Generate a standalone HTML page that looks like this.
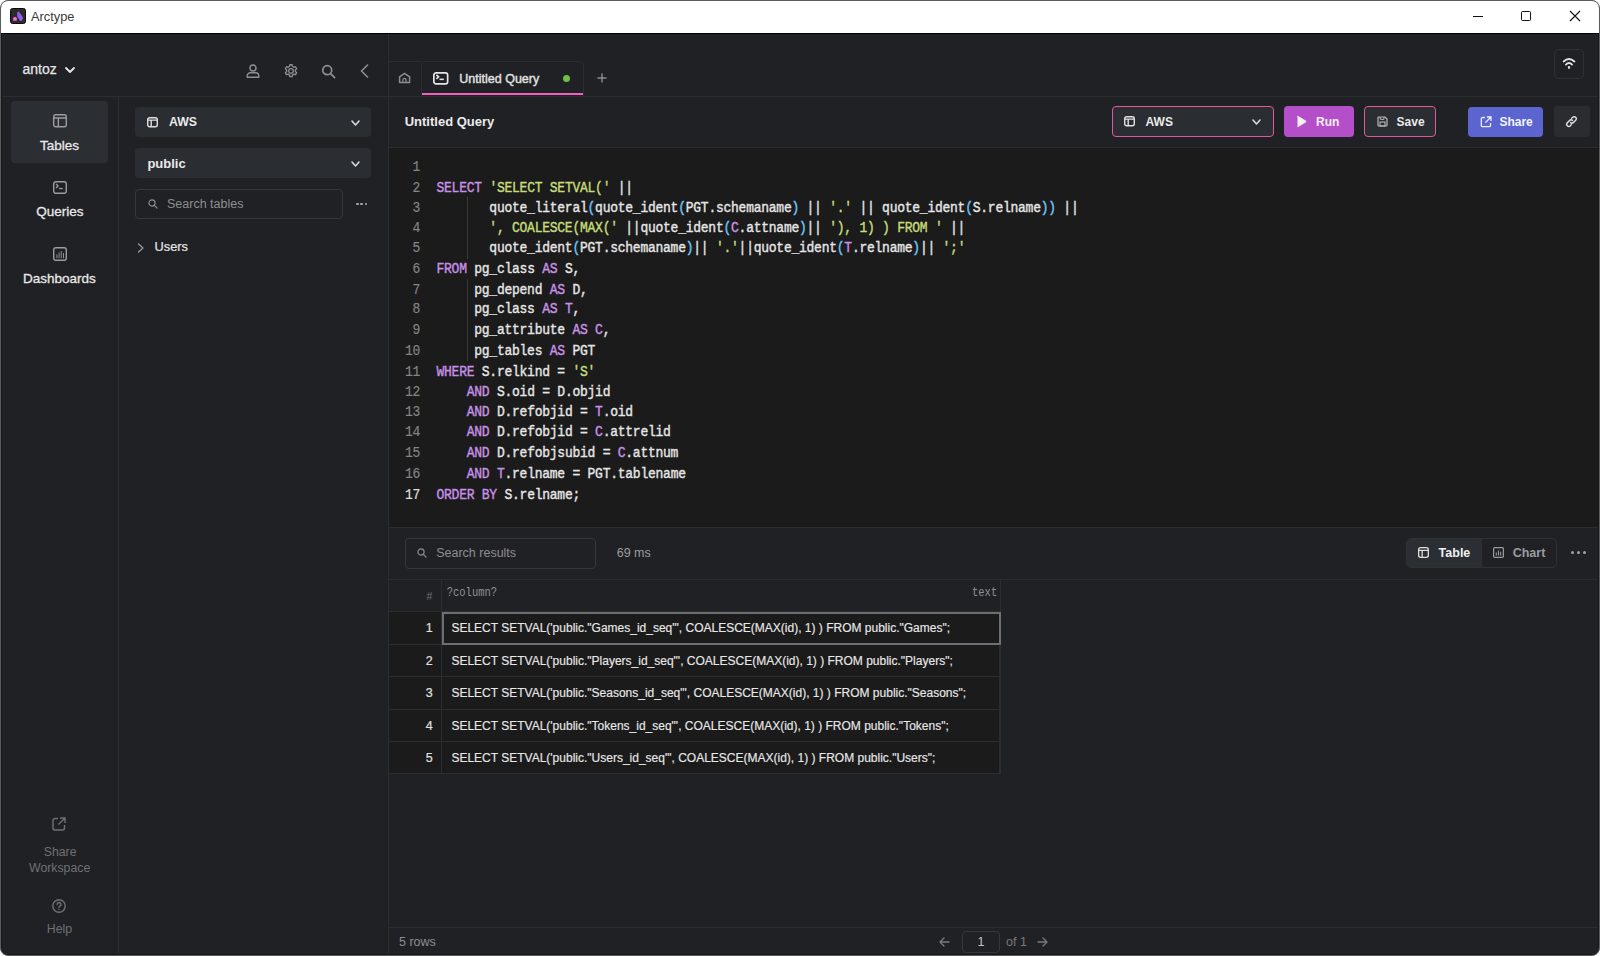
<!DOCTYPE html>
<html><head><meta charset="utf-8">
<style>
*{box-sizing:border-box;margin:0;padding:0}
html,body{width:1600px;height:956px;overflow:hidden;background:#ffffff}
body{font-family:"Liberation Sans",sans-serif;position:relative}
.a{position:absolute}
.t{position:absolute;white-space:nowrap;line-height:1}
svg{position:absolute;overflow:visible}
.code{position:absolute;font-family:"Liberation Mono",monospace;font-size:13px;letter-spacing:-0.25px;color:#e6e6e6;white-space:pre;line-height:17.774px;transform:scaleY(1.15);transform-origin:0 0;-webkit-text-stroke:0.35px currentColor}
.k{color:#c890e6}
.s{color:#c6dc7a}
.p{color:#6cc6fa}
.ln{position:absolute;text-align:right;font-family:"Liberation Mono",monospace;font-size:13px;letter-spacing:-0.25px;color:#858585;white-space:pre;line-height:17.774px;transform:scaleY(1.15);transform-origin:0 0;-webkit-text-stroke:0.15px currentColor}
</style></head><body>
<div class="a" style="left:0px;top:0px;width:1600px;height:956px;background:#202124;border-radius:8px;border:1px solid #5a5c5e;"></div>
<div class="a" style="left:1px;top:1px;width:1598px;height:32px;background:#fff;border-radius:7px 7px 0 0;"></div>
<div class="a" style="left:1px;top:33px;width:1598px;height:1px;background:#000;"></div>
<div class="a" style="left:10px;top:8px;width:16px;height:16px;background:#2d2a2a;border-radius:2.5px;border:1px solid #0c0a0a;"></div>
<svg style="left:10px;top:8px" width="16" height="16"><path d="M7.2 4.5 L8.4 3.2 L9.5 4.5 L12.5 8.8 L12.9 10.8 L11.8 12.7 L9.8 12.7 L7.3 8.5 Z" fill="#8f5cf6"/><path d="M3 10 L5 8.8 L7 10 L6.7 12.7 L3.3 12.7 Z" fill="#f46bd6"/></svg>
<div class="t" style="left:31px;top:11.46px;font-size:12.8px;color:#3a3a3a;">Arctype</div>
<div class="a" style="left:1473px;top:16px;width:10px;height:1px;background:#111;"></div>
<div class="a" style="left:1521px;top:11px;width:10px;height:10px;border:1px solid #111;border-radius:1.5px;"></div>
<svg style="left:1570px;top:11px" width="10" height="10"><path d="M0 0 L10 10 M10 0 L0 10" stroke="#111" stroke-width="1.1"/></svg>
<div class="a" style="left:1px;top:96px;width:1598px;height:1px;background:#2b2d31;"></div>
<div class="a" style="left:388px;top:34px;width:1px;height:921px;background:#2b2d31;"></div>
<div class="a" style="left:118px;top:97px;width:1px;height:858px;background:#2b2d31;"></div>
<div class="t" style="left:22.5px;top:62.15px;font-size:14px;color:#e6e6e6;-webkit-text-stroke:0.25px #e6e6e6;">antoz</div>
<svg style="left:65px;top:67px" width="10" height="7"><path d="M1 1 L5 5 L9 1" fill="none" stroke="#e6e6e6" stroke-width="1.8" stroke-linecap="round" stroke-linejoin="round"/></svg>
<svg style="left:246px;top:64px" width="14" height="14" viewBox="0 0 14 14"><circle cx="7" cy="4" r="3" fill="none" stroke="#8d8f93" stroke-width="1.4"/><path d="M1.2 13.2 v-1.3 a3.2 3.2 0 0 1 3.2 -3.2 h5.2 a3.2 3.2 0 0 1 3.2 3.2 v1.3 Z" fill="none" stroke="#8d8f93" stroke-width="1.4" stroke-linejoin="round"/></svg>
<svg style="left:283px;top:63px" width="16" height="16" viewBox="0 0 24 24"><path d="M12 8.5a3.5 3.5 0 1 0 0 7a3.5 3.5 0 1 0 0-7z" fill="none" stroke="#8d8f93" stroke-width="2"/><path d="M10.3 2.6h3.4l.6 2.6a7.5 7.5 0 0 1 2 1.2l2.5-.8 1.7 3-2 1.8a7.5 7.5 0 0 1 0 2.3l2 1.8-1.7 3-2.5-.8a7.5 7.5 0 0 1-2 1.2l-.6 2.6h-3.4l-.6-2.6a7.5 7.5 0 0 1-2-1.2l-2.5.8-1.7-3 2-1.8a7.5 7.5 0 0 1 0-2.3l-2-1.8 1.7-3 2.5.8a7.5 7.5 0 0 1 2-1.2z" fill="none" stroke="#8d8f93" stroke-width="2" stroke-linejoin="round"/></svg>
<svg style="left:321px;top:64px" width="15" height="15" viewBox="0 0 15 15"><circle cx="6.2" cy="6.2" r="4.5" fill="none" stroke="#8d8f93" stroke-width="1.7"/><path d="M9.6 9.6 L13.6 13.6" stroke="#8d8f93" stroke-width="1.7" stroke-linecap="round"/></svg>
<svg style="left:360px;top:64px" width="9" height="14" viewBox="0 0 9 14"><path d="M7.5 1 L1.5 7 L7.5 13" fill="none" stroke="#8d8f93" stroke-width="1.6" stroke-linecap="round" stroke-linejoin="round"/></svg>
<div class="a" style="left:11px;top:101px;width:97px;height:62px;background:#2b2e32;border-radius:4px;"></div>
<svg style="left:53px;top:114px" width="14" height="13.5" viewBox="0 0 14 13.5"><rect x="0.7" y="0.7" width="12.6" height="12.1" rx="2" fill="none" stroke="#9a9ca0" stroke-width="1.4"/><path d="M0.7 4.05 H13.3 M5.32 4.05 V12.8" stroke="#9a9ca0" stroke-width="1.4"/></svg>
<div class="t" style="left:40px;top:138.97px;font-size:13.5px;color:#e8e8e8;-webkit-text-stroke:0.3px #e8e8e8;">Tables</div>
<svg style="left:53px;top:181px" width="14" height="13" viewBox="0 0 14 13"><rect x="0.7" y="0.7" width="12.6" height="11.6" rx="2.2" fill="none" stroke="#9a9ca0" stroke-width="1.4"/><path d="M3.08 2.86 L5.04 4.94 L3.08 7.02" fill="none" stroke="#9a9ca0" stroke-width="1.3299999999999998" stroke-linejoin="miter"/><path d="M5.88 7.54 H9.80" fill="none" stroke="#9a9ca0" stroke-width="1.26"/></svg>
<div class="t" style="left:36.2px;top:205.07px;font-size:13.5px;color:#e8e8e8;-webkit-text-stroke:0.3px #e8e8e8;">Queries</div>
<svg style="left:53px;top:247px" width="14" height="14" viewBox="0 0 14 14"><rect x="0.7" y="0.7" width="12.6" height="12.6" rx="2" fill="none" stroke="#9a9ca0" stroke-width="1.4"/><path d="M3.9 11.2 V7.5 M6.1 11.2 V5.5 M8.3 11.2 V4 M10.5 11.2 V6" stroke="#9a9ca0" stroke-width="0.9"/></svg>
<div class="t" style="left:23px;top:272.27px;font-size:13.5px;color:#e8e8e8;-webkit-text-stroke:0.3px #e8e8e8;">Dashboards</div>
<svg style="left:52px;top:817px" width="14" height="14" viewBox="0 0 14 14"><path d="M6 1.5 H3 a2 2 0 0 0 -2 2 V11 a2 2 0 0 0 2 2 H10.5 a2 2 0 0 0 2 -2 V8" fill="none" stroke="#6e7074" stroke-width="1.4"/><path d="M8 1 H13 V6 M13 1 L6.5 7.5" fill="none" stroke="#6e7074" stroke-width="1.4"/></svg>
<div class="t" style="left:43.7px;top:845.89px;font-size:12.3px;color:#6e7074;">Share</div>
<div class="t" style="left:29px;top:862.19px;font-size:12.3px;color:#6e7074;">Workspace</div>
<svg style="left:52px;top:899px" width="14" height="14" viewBox="0 0 14 14"><circle cx="7" cy="7" r="6.2" fill="none" stroke="#6e7074" stroke-width="1.4"/><path d="M5.2 5.4 a1.9 1.9 0 1 1 2.6 1.7 c-0.6 0.3 -0.8 0.6 -0.8 1.2" fill="none" stroke="#6e7074" stroke-width="1.4" stroke-linecap="round"/><circle cx="7" cy="10.3" r="0.8" fill="#6e7074"/></svg>
<div class="t" style="left:46.8px;top:923.39px;font-size:12.3px;color:#6e7074;">Help</div>
<div class="a" style="left:135px;top:107px;width:236px;height:30px;background:#2a2d31;border-radius:4px;"></div>
<svg style="left:147px;top:117px" width="11" height="10.5" viewBox="0 0 11 10.5"><rect x="0.7" y="0.7" width="9.6" height="9.1" rx="2" fill="none" stroke="#e2e2e2" stroke-width="1.4"/><path d="M0.7 3.15 H10.3 M4.18 3.15 V9.8" stroke="#e2e2e2" stroke-width="1.4"/></svg>
<div class="t" style="left:169px;top:116.39px;font-size:12.3px;color:#eaeaea;font-weight:bold;">AWS</div>
<svg style="left:350.5px;top:120px" width="9" height="6" viewBox="0 0 9 6"><path d="M1 1 L4.5 5 L8 1" fill="none" stroke="#d8d8d8" stroke-width="1.6" stroke-linecap="round" stroke-linejoin="round"/></svg>
<div class="a" style="left:135px;top:148px;width:236px;height:30px;background:#2a2d31;border-radius:4px;"></div>
<div class="t" style="left:147.4px;top:156.69px;font-size:13px;color:#eaeaea;font-weight:bold;">public</div>
<svg style="left:350.5px;top:160.5px" width="9" height="6" viewBox="0 0 9 6"><path d="M1 1 L4.5 5 L8 1" fill="none" stroke="#d8d8d8" stroke-width="1.6" stroke-linecap="round" stroke-linejoin="round"/></svg>
<div class="a" style="left:135px;top:189px;width:208px;height:30px;border:1px solid #35373b;border-radius:4px;"></div>
<svg style="left:148px;top:199px" width="10" height="10" viewBox="0 0 11 11"><circle cx="4.4" cy="4.4" r="3.4" fill="none" stroke="#8a8c90" stroke-width="1.3"/><path d="M7 7 L10 10" stroke="#8a8c90" stroke-width="1.4" stroke-linecap="round"/></svg>
<div class="t" style="left:167px;top:198.42px;font-size:12.5px;color:#8c8e92;">Search tables</div>
<div class="a" style="left:356.0px;top:202.8px;width:2.6px;height:2.6px;background:#a6a8ac;border-radius:50%;"></div>
<div class="a" style="left:360.4px;top:202.8px;width:2.6px;height:2.6px;background:#a6a8ac;border-radius:50%;"></div>
<div class="a" style="left:364.8px;top:202.8px;width:2.6px;height:2.6px;background:#a6a8ac;border-radius:50%;"></div>
<svg style="left:137px;top:243px" width="8" height="10" viewBox="0 0 8 10"><path d="M1.5 1 L6 5 L1.5 9" fill="none" stroke="#9a9ca0" stroke-width="1.3" stroke-linecap="round" stroke-linejoin="round"/></svg>
<div class="t" style="left:154.6px;top:241.16px;font-size:12.8px;color:#e6e6e6;-webkit-text-stroke:0.2px #e6e6e6;">Users</div>
<div class="a" style="left:389px;top:61px;width:33px;height:1px;background:#2b2d31;"></div>
<svg style="left:398px;top:72px" width="13" height="12" viewBox="0 0 13 12"><path d="M1.6 4.9 L6.5 1.3 L11.6 4.9 V10.6 H1.6 Z" fill="none" stroke="#8a8d93" stroke-width="1.5" stroke-linejoin="round"/><path d="M4.9 10.6 V8 a1.6 1.6 0 0 1 3.2 0 V10.6" fill="none" stroke="#8a8d93" stroke-width="1.3"/></svg>
<div class="a" style="left:421px;top:61px;width:163px;height:36px;border:1px solid #2b2d31;border-bottom:none;border-radius:5px 5px 0 0;"></div>
<div class="a" style="left:422px;top:93px;width:161px;height:2px;background:#f35fc0;"></div>
<svg style="left:433px;top:72px" width="15.5" height="12.7" viewBox="0 0 15.5 12.7"><rect x="0.85" y="0.85" width="13.8" height="11.0" rx="2.2" fill="none" stroke="#e6e6e6" stroke-width="1.7"/><path d="M3.41 2.79 L5.58 4.83 L3.41 6.86" fill="none" stroke="#e6e6e6" stroke-width="1.615" stroke-linejoin="miter"/><path d="M6.51 7.37 H10.85" fill="none" stroke="#e6e6e6" stroke-width="1.53"/></svg>
<div class="t" style="left:459.3px;top:72.52px;font-size:12.5px;color:#e2e2e2;-webkit-text-stroke:0.4px #e2e2e2;">Untitled Query</div>
<div class="a" style="left:562.5px;top:75px;width:7.2px;height:7.2px;background:#6cc044;border-radius:50%;"></div>
<svg style="left:597px;top:73px" width="10" height="10" viewBox="0 0 10 10"><path d="M5 0.5 V9.5 M0.5 5 H9.5" stroke="#8d8f93" stroke-width="1.4"/></svg>
<div class="a" style="left:1554px;top:49px;width:30px;height:30px;border:1px solid #2f3135;border-radius:5px;"></div>
<svg style="left:1560px;top:56px" width="18" height="16" viewBox="0 0 18 16"><path d="M3.6 5.5 Q9 0.4 14.4 5.5" fill="none" stroke="#e4e4e4" stroke-width="1.8" stroke-linecap="round"/><path d="M5.9 8.6 Q9 5.4 12.1 8.6" fill="none" stroke="#e4e4e4" stroke-width="1.8" stroke-linecap="round"/><path d="M9 11.1 V11.8" stroke="#e4e4e4" stroke-width="2.2" stroke-linecap="round"/></svg>
<div class="a" style="left:389px;top:147px;width:1210px;height:1px;background:#2b2d31;"></div>
<div class="t" style="left:404.7px;top:115.19px;font-size:13px;color:#ececec;font-weight:bold;">Untitled Query</div>
<div class="a" style="left:1112px;top:106px;width:162px;height:31px;background:#2a2d31;border:1px solid #e0589e;border-radius:4px;"></div>
<svg style="left:1124px;top:116px" width="11" height="10.5" viewBox="0 0 11 10.5"><rect x="0.7" y="0.7" width="9.6" height="9.1" rx="2" fill="none" stroke="#e2e2e2" stroke-width="1.4"/><path d="M0.7 3.15 H10.3 M4.18 3.15 V9.8" stroke="#e2e2e2" stroke-width="1.4"/></svg>
<div class="t" style="left:1145.6px;top:116.14px;font-size:12px;color:#eaeaea;font-weight:bold;">AWS</div>
<svg style="left:1252px;top:118.5px" width="9" height="6" viewBox="0 0 9 6"><path d="M1 1 L4.5 5 L8 1" fill="none" stroke="#d8d8d8" stroke-width="1.6" stroke-linecap="round" stroke-linejoin="round"/></svg>
<div class="a" style="left:1284px;top:106px;width:70px;height:31px;background:#b54fc9;border-radius:4px;"></div>
<svg style="left:1296px;top:115px" width="11" height="13" viewBox="0 0 11 13"><path d="M1.5 1.2 Q1.5 0.5 2.2 0.9 L10 5.8 Q10.6 6.5 10 7.2 L2.2 12.1 Q1.5 12.5 1.5 11.8 Z" fill="#f4f0f6"/></svg>
<div class="t" style="left:1316px;top:116.14px;font-size:12px;color:#f8f0fa;font-weight:bold;">Run</div>
<div class="a" style="left:1364px;top:106px;width:72px;height:31px;background:#2a2d31;border:1px solid #e0589e;border-radius:4px;"></div>
<svg style="left:1377px;top:116px" width="11" height="11" viewBox="0 0 11 11"><path d="M1 2 a1 1 0 0 1 1-1 H8 L10 3 V9 a1 1 0 0 1 -1 1 H2 a1 1 0 0 1 -1-1 Z" fill="none" stroke="#b8b8b8" stroke-width="1.2"/><rect x="3" y="6" width="5" height="4" fill="none" stroke="#b8b8b8" stroke-width="1.1"/><path d="M3.2 1 V3.3 H7 V1" fill="none" stroke="#b8b8b8" stroke-width="1"/></svg>
<div class="t" style="left:1396.6px;top:116.14px;font-size:12px;color:#eaeaea;font-weight:bold;">Save</div>
<div class="a" style="left:1468px;top:107px;width:75px;height:30px;background:#5b64cf;border-radius:4px;"></div>
<svg style="left:1480px;top:116px" width="12" height="12" viewBox="0 0 12 12"><path d="M5 1.5 H2.5 a1.2 1.2 0 0 0 -1.2 1.2 V9.5 a1.2 1.2 0 0 0 1.2 1.2 H9.3 a1.2 1.2 0 0 0 1.2 -1.2 V7" fill="none" stroke="#eef" stroke-width="1.3"/><path d="M7 1 H11 V5 M11 1 L5.5 6.5" fill="none" stroke="#eef" stroke-width="1.3"/></svg>
<div class="t" style="left:1499.4px;top:116.14px;font-size:12px;color:#f4f4ff;font-weight:bold;">Share</div>
<div class="a" style="left:1554px;top:106px;width:36px;height:31px;background:#2a2c30;border-radius:4px;"></div>
<svg style="left:1565px;top:115px" width="13" height="13" viewBox="0 0 13 13"><path d="M5.5 7.5 a2 2 0 0 0 3 0 l2.2 -2.2 a2 2 0 0 0 -3 -3 l-1 1" fill="none" stroke="#e0e0e0" stroke-width="1.4" stroke-linecap="round"/><path d="M7.5 5.5 a2 2 0 0 0 -3 0 l-2.2 2.2 a2 2 0 0 0 3 3 l1 -1" fill="none" stroke="#e0e0e0" stroke-width="1.4" stroke-linecap="round"/></svg>
<div class="a" style="left:389px;top:148px;width:1209px;height:379px;background:#1b1b1b;"></div>
<div class="code" style="left:436.5px;top:157.00px">
<span class="k">SELECT</span> <span class="s">&#x27;SELECT SETVAL(&#x27;</span> ||
       quote_literal<span class="p">(</span>quote_ident<span class="p">(</span>PGT.schemaname<span class="p">)</span> || <span class="s">&#x27;.&#x27;</span> || quote_ident<span class="p">(</span>S.relname<span class="p">))</span> ||
       <span class="s">&#x27;, COALESCE(MAX(&#x27;</span> ||quote_ident<span class="p">(</span><span class="k">C</span>.attname<span class="p">)</span>|| <span class="s">&#x27;), 1) ) FROM &#x27;</span> ||
       quote_ident<span class="p">(</span>PGT.schemaname<span class="p">)</span>|| <span class="s">&#x27;.&#x27;</span>||quote_ident<span class="p">(</span><span class="k">T</span>.relname<span class="p">)</span>|| <span class="s">&#x27;;&#x27;</span>
<span class="k">FROM</span> pg_class <span class="k">AS</span> S,
     pg_depend <span class="k">AS</span> D,
     pg_class <span class="k">AS</span> <span class="k">T</span>,
     pg_attribute <span class="k">AS</span> <span class="k">C</span>,
     pg_tables <span class="k">AS</span> PGT
<span class="k">WHERE</span> S.relkind = <span class="s">&#x27;S&#x27;</span>
    <span class="k">AND</span> S.oid = D.objid
    <span class="k">AND</span> D.refobjid = <span class="k">T</span>.oid
    <span class="k">AND</span> D.refobjid = <span class="k">C</span>.attrelid
    <span class="k">AND</span> D.refobjsubid = <span class="k">C</span>.attnum
    <span class="k">AND</span> <span class="k">T</span>.relname = PGT.tablename
<span class="k">ORDER BY</span> S.relname;</div>
<div class="ln" style="left:380px;width:40px;top:157.00px">1
2
3
4
5
6
7
8
9
10
11
12
13
14
15
16
<span style="color:#e0e0e0">17</span></div>
<div class="a" style="left:467px;top:197px;width:1px;height:62px;background:#3a3a3a;"></div>
<div class="a" style="left:467px;top:279px;width:1px;height:82px;background:#3a3a3a;"></div>
<div class="a" style="left:389px;top:527px;width:1209px;height:1px;background:#2b2d31;"></div>
<div class="a" style="left:405px;top:538px;width:191px;height:31px;border:1px solid #35373b;border-radius:4px;"></div>
<svg style="left:417px;top:548px" width="10" height="10" viewBox="0 0 11 11"><circle cx="4.4" cy="4.4" r="3.4" fill="none" stroke="#8a8c90" stroke-width="1.3"/><path d="M7 7 L10 10" stroke="#8a8c90" stroke-width="1.4" stroke-linecap="round"/></svg>
<div class="t" style="left:436.2px;top:546.92px;font-size:12.5px;color:#8c8e92;">Search results</div>
<div class="t" style="left:616.7px;top:546.72px;font-size:12.5px;color:#9a9ca0;">69 ms</div>
<div class="a" style="left:1406px;top:538px;width:151px;height:30px;border:1px solid #2f3135;border-radius:5px;overflow:hidden;"></div>
<div class="a" style="left:1407px;top:539px;width:75px;height:28px;background:#2b2e32;border-radius:4px 0 0 4px;"></div>
<svg style="left:1418px;top:547px" width="11" height="11" viewBox="0 0 11 11"><rect x="0.65" y="0.65" width="9.7" height="9.7" rx="2" fill="none" stroke="#e0e0e0" stroke-width="1.3"/><path d="M0.65 3.30 H10.35 M4.18 3.30 V10.35" stroke="#e0e0e0" stroke-width="1.3"/></svg>
<div class="t" style="left:1438.6px;top:546.92px;font-size:12.5px;color:#f0f0f0;font-weight:bold;">Table</div>
<svg style="left:1493px;top:547px" width="11" height="11" viewBox="0 0 11 11"><rect x="0.6" y="0.6" width="9.8" height="9.8" rx="1.2" fill="none" stroke="#9a9ca0" stroke-width="1.2"/><path d="M3.3 8.5 V5.5 M5.5 8.5 V3.5 M7.7 8.5 V4.8" stroke="#9a9ca0" stroke-width="1.1"/></svg>
<div class="t" style="left:1512.7px;top:546.92px;font-size:12.5px;color:#9a9ca0;font-weight:bold;">Chart</div>
<div class="a" style="left:1571px;top:551px;width:3px;height:3px;background:#a0a2a6;border-radius:50%;"></div>
<div class="a" style="left:1577px;top:551px;width:3px;height:3px;background:#a0a2a6;border-radius:50%;"></div>
<div class="a" style="left:1583px;top:551px;width:3px;height:3px;background:#a0a2a6;border-radius:50%;"></div>
<div class="a" style="left:389px;top:579px;width:1209px;height:1px;background:#2b2d31;"></div>
<div class="a" style="left:441px;top:580px;width:1px;height:32px;background:#2b2d31;"></div>
<div class="a" style="left:1000px;top:580px;width:1px;height:32px;background:#2b2d31;"></div>
<div class="t" style="left:426.5px;top:590.61px;font-size:10.5px;color:#707276;">#</div>
<div class="t" style="left:446.7px;top:586.55px;font-family:'Liberation Mono',monospace;font-size:10.5px;color:#8e9094;transform:scaleY(1.15);transform-origin:0 0">?column?</div>
<div class="t" style="left:972px;top:586.55px;font-family:'Liberation Mono',monospace;font-size:10.5px;color:#8e9094;transform:scaleY(1.15);transform-origin:0 0">text</div>
<div class="a" style="left:389px;top:611px;width:612px;height:163px;background:#2b2d31;"></div>
<div class="a" style="left:389px;top:612px;width:52px;height:32px;background:#1b1b1c"></div>
<div class="a" style="left:442px;top:612px;width:557px;height:32px;background:#1b1b1c"></div>
<div class="t" style="left:400px;width:32.7px;text-align:right;top:621.92px;font-size:12.5px;color:#e0e0e0;-webkit-text-stroke:0.2px #e0e0e0">1</div>
<div class="t" style="left:451.4px;top:622.34px;font-size:12px;color:#e8e8e8;-webkit-text-stroke:0.15px #e8e8e8;">SELECT SETVAL(&#x27;public.&quot;Games_id_seq&quot;&#x27;, COALESCE(MAX(id), 1) ) FROM public.&quot;Games&quot;;</div>
<div class="a" style="left:389px;top:645px;width:52px;height:31px;background:#1b1b1c"></div>
<div class="a" style="left:442px;top:645px;width:557px;height:31px;background:#1b1b1c"></div>
<div class="t" style="left:400px;width:32.7px;text-align:right;top:654.92px;font-size:12.5px;color:#e0e0e0;-webkit-text-stroke:0.2px #e0e0e0">2</div>
<div class="t" style="left:451.4px;top:655.34px;font-size:12px;color:#e8e8e8;-webkit-text-stroke:0.15px #e8e8e8;">SELECT SETVAL(&#x27;public.&quot;Players_id_seq&quot;&#x27;, COALESCE(MAX(id), 1) ) FROM public.&quot;Players&quot;;</div>
<div class="a" style="left:389px;top:677px;width:52px;height:32px;background:#1b1b1c"></div>
<div class="a" style="left:442px;top:677px;width:557px;height:32px;background:#1b1b1c"></div>
<div class="t" style="left:400px;width:32.7px;text-align:right;top:686.92px;font-size:12.5px;color:#e0e0e0;-webkit-text-stroke:0.2px #e0e0e0">3</div>
<div class="t" style="left:451.4px;top:687.34px;font-size:12px;color:#e8e8e8;-webkit-text-stroke:0.15px #e8e8e8;">SELECT SETVAL(&#x27;public.&quot;Seasons_id_seq&quot;&#x27;, COALESCE(MAX(id), 1) ) FROM public.&quot;Seasons&quot;;</div>
<div class="a" style="left:389px;top:710px;width:52px;height:31px;background:#1b1b1c"></div>
<div class="a" style="left:442px;top:710px;width:557px;height:31px;background:#1b1b1c"></div>
<div class="t" style="left:400px;width:32.7px;text-align:right;top:719.92px;font-size:12.5px;color:#e0e0e0;-webkit-text-stroke:0.2px #e0e0e0">4</div>
<div class="t" style="left:451.4px;top:720.34px;font-size:12px;color:#e8e8e8;-webkit-text-stroke:0.15px #e8e8e8;">SELECT SETVAL(&#x27;public.&quot;Tokens_id_seq&quot;&#x27;, COALESCE(MAX(id), 1) ) FROM public.&quot;Tokens&quot;;</div>
<div class="a" style="left:389px;top:742px;width:52px;height:31px;background:#1b1b1c"></div>
<div class="a" style="left:442px;top:742px;width:557px;height:31px;background:#1b1b1c"></div>
<div class="t" style="left:400px;width:32.7px;text-align:right;top:751.92px;font-size:12.5px;color:#e0e0e0;-webkit-text-stroke:0.2px #e0e0e0">5</div>
<div class="t" style="left:451.4px;top:752.34px;font-size:12px;color:#e8e8e8;-webkit-text-stroke:0.15px #e8e8e8;">SELECT SETVAL(&#x27;public.&quot;Users_id_seq&quot;&#x27;, COALESCE(MAX(id), 1) ) FROM public.&quot;Users&quot;;</div>
<div class="a" style="left:442px;top:612px;width:559px;height:33px;border:2px solid #6c6f73;"></div>
<div class="a" style="left:389px;top:927px;width:1209px;height:1px;background:#2b2d31;"></div>
<div class="t" style="left:399px;top:936.12px;font-size:12.5px;color:#8c8e92;">5 rows</div>
<svg style="left:939px;top:937px" width="11" height="10" viewBox="0 0 11 10"><path d="M10 5 H1.5 M5 1 L1 5 L5 9" fill="none" stroke="#77797d" stroke-width="1.3" stroke-linecap="round" stroke-linejoin="round"/></svg>
<div class="a" style="left:962px;top:931px;width:38px;height:22px;border:1px solid #35373b;border-radius:4px;"></div>
<div class="t" style="left:977.5px;top:936.42px;font-size:12.5px;color:#c4c4c4;">1</div>
<div class="t" style="left:1006px;top:936.42px;font-size:12.5px;color:#77797d;">of 1</div>
<svg style="left:1037px;top:937px" width="11" height="10" viewBox="0 0 11 10"><path d="M1 5 H9.5 M6 1 L10 5 L6 9" fill="none" stroke="#77797d" stroke-width="1.3" stroke-linecap="round" stroke-linejoin="round"/></svg>
<div class="a" style="left:1px;top:34px;width:1px;height:913px;background:#17181a;"></div>
<div class="a" style="left:1598px;top:34px;width:1px;height:913px;background:#17181a;"></div>
<div class="a" style="left:8px;top:954px;width:1584px;height:1px;background:#17181a;"></div>
</body></html>
